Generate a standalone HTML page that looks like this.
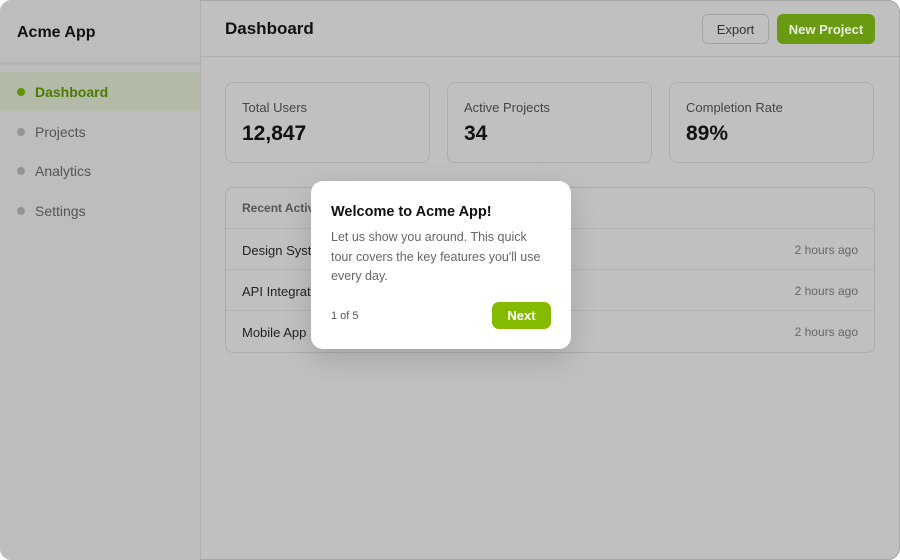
<!DOCTYPE html>
<html><head><style>
*{box-sizing:border-box;margin:0;padding:0}
body{width:900px;height:560px;background:#fff;font-family:"Liberation Sans",sans-serif;overflow:hidden}
.frame{position:absolute;left:0;top:0;width:900px;height:560px;border-radius:12px;background:#c0c0c0;overflow:hidden;box-shadow:inset 0 0 0 1px #a8a8a8}
.side{position:absolute;left:0;top:0;width:201px;height:560px;background:#bdbdbd;border-right:1px solid #aeaeae}
.logo{position:absolute;left:17px;top:24px;font-size:16px;font-weight:bold;color:#111}
.sline{position:absolute;left:0;top:62px;width:200px;height:3px;background:#b2b2b2}
.nav{position:absolute;left:0;width:200px;height:39px;font-size:14px;color:#555;padding-left:35px;line-height:41px}
.nav:before{content:"";position:absolute;left:17px;top:16px;width:8px;height:8px;border-radius:50%;background:#949494}
.nav.act{background:#b4baa8;color:#4b7a05;font-weight:bold}
.nav.act:before{background:#5c9400}
.hdr{position:absolute;left:201px;top:0;right:0;height:57px;border-bottom:1px solid #adadad}
.h1{position:absolute;left:24px;top:19px;font-size:17px;font-weight:bold;color:#111}
.btn{position:absolute;top:14px;height:30px;border-radius:6px;font-size:13px;line-height:29px;text-align:center}
.card{position:absolute;top:82px;width:205px;height:81px;border:1px solid #adadad;border-radius:8px}
.card .l{position:absolute;left:16px;top:17px;font-size:13px;color:#444}
.card .v{position:absolute;left:16px;top:39px;font-size:21px;font-weight:bold;color:#111}
.tbl{position:absolute;left:225px;top:187px;width:650px;height:166px;border:1px solid #adadad;border-radius:8px}
.row{position:absolute;left:0;width:648px;height:41px;border-top:1px solid #b3b3b3;font-size:13px;color:#222;line-height:43px;padding-left:16px}
.row span{position:absolute;right:16px;color:#666;font-size:12px}
.pop{position:absolute;left:311px;top:181px;width:260px;height:168px;background:#fff;border-radius:12px;box-shadow:0 10px 30px rgba(0,0,0,.15)}
</style></head><body>
<div class="frame">
<div class="side">
<div class="logo">Acme App</div>
<div class="sline"></div>
<div class="nav act" style="top:72px">Dashboard</div>
<div class="nav" style="top:112px">Projects</div>
<div class="nav" style="top:151px">Analytics</div>
<div class="nav" style="top:191px">Settings</div>
</div>
<div class="hdr"><div class="h1">Dashboard</div></div>
<div class="btn" style="left:702px;width:67px;border:1px solid #a3a3a3;color:#333">Export</div>
<div class="btn" style="left:777px;width:98px;background:#6a9a12;color:#e8f0dc;font-weight:bold;border:1px solid #6a9a12">New Project</div>
<div class="card" style="left:225px"><div class="l">Total Users</div><div class="v">12,847</div></div>
<div class="card" style="left:447px"><div class="l">Active Projects</div><div class="v">34</div></div>
<div class="card" style="left:669px"><div class="l">Completion Rate</div><div class="v">89%</div></div>
<div class="tbl">
<div style="position:absolute;left:16px;top:13px;font-size:12px;font-weight:bold;color:#555">Recent Activity</div>
<div class="row" style="top:40px">Design System Update<span>2 hours ago</span></div>
<div class="row" style="top:81px">API Integration<span>2 hours ago</span></div>
<div class="row" style="top:122px">Mobile App<span>2 hours ago</span></div>
</div>
<div class="pop">
<div style="position:absolute;left:20px;top:23px;font-size:14.5px;font-weight:bold;color:#111">Welcome to Acme App!</div>
<div style="position:absolute;left:20px;top:47px;width:212px;font-size:12.5px;line-height:19.5px;color:#666">Let us show you around. This quick tour covers the key features you'll use every day.</div>
<div style="position:absolute;left:20px;top:129px;font-size:11px;color:#555">1 of 5</div>
<div style="position:absolute;left:181px;top:121px;width:59px;height:27px;border-radius:7px;background:#84bb00;color:#fff;font-weight:bold;font-size:13px;text-align:center;line-height:28px">Next</div>
</div>
</div>
</body></html>
